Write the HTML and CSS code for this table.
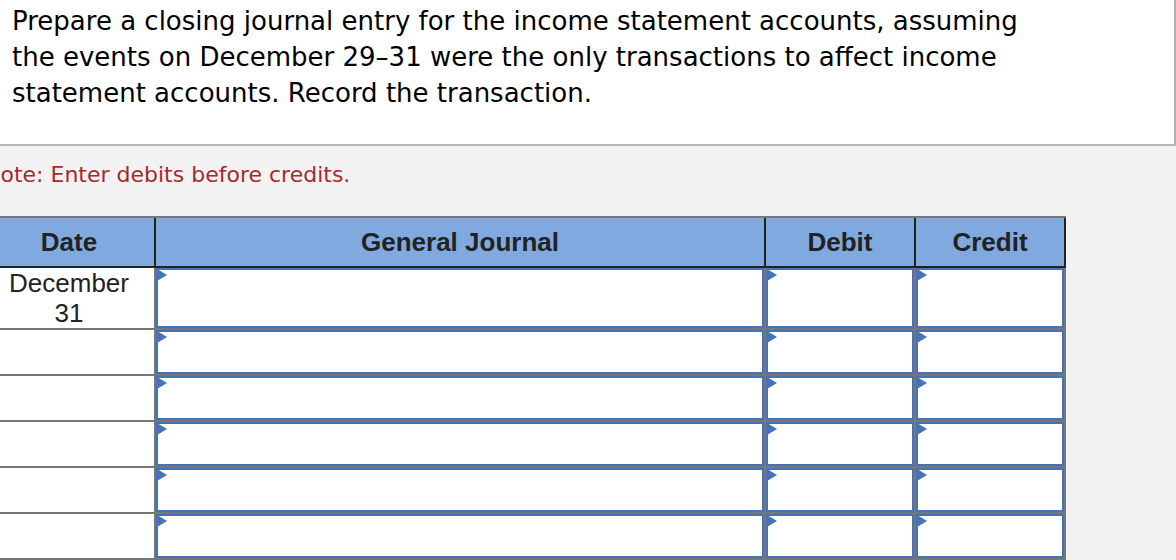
FILE: index.html
```html
<!DOCTYPE html>
<html lang="en">
<head>
<meta charset="utf-8">
<title>Closing journal entry</title>
<link rel="stylesheet" href="styles.css">
</head>
<body>
<div class="page">
  <div class="question">
    <p class="question-text">Prepare a closing journal entry for the income statement accounts, assuming the events on December 29–31 were the only transactions to affect income statement accounts. Record the transaction.</p>
  </div>
  <p class="note">Note: Enter debits before credits.</p>
  <div class="journal">
    <div class="journal-head">
      <div class="hcell">Date</div>
      <div class="hcell">General Journal</div>
      <div class="hcell">Debit</div>
      <div class="hcell">Credit</div>
    </div>
    <div class="journal-body">
      <div class="date-cell">December<br>31</div>
      <div class="input-cell"><span class="flag"></span></div>
      <div class="input-cell"><span class="flag"></span></div>
      <div class="input-cell"><span class="flag"></span></div>

      <div class="date-cell"></div>
      <div class="input-cell"><span class="flag"></span></div>
      <div class="input-cell"><span class="flag"></span></div>
      <div class="input-cell"><span class="flag"></span></div>

      <div class="date-cell"></div>
      <div class="input-cell"><span class="flag"></span></div>
      <div class="input-cell"><span class="flag"></span></div>
      <div class="input-cell"><span class="flag"></span></div>

      <div class="date-cell"></div>
      <div class="input-cell"><span class="flag"></span></div>
      <div class="input-cell"><span class="flag"></span></div>
      <div class="input-cell"><span class="flag"></span></div>

      <div class="date-cell"></div>
      <div class="input-cell"><span class="flag"></span></div>
      <div class="input-cell"><span class="flag"></span></div>
      <div class="input-cell"><span class="flag"></span></div>

      <div class="date-cell"></div>
      <div class="input-cell"><span class="flag"></span></div>
      <div class="input-cell"><span class="flag"></span></div>
      <div class="input-cell"><span class="flag"></span></div>
    </div>
  </div>
</div>
</body>
</html>
```

FILE: styles.css
```css
html, body {
  margin: 0;
  padding: 0;
  background: #f2f2f2;
  overflow: hidden;
}

.page {
  margin-left: -16px;
  width: 1192px;
}

.question {
  background: #ffffff;
  border-right: 2px solid #b4b4b4;
  border-bottom: 2px solid #b4b4b4;
  padding: 3px 0 33px 28px;
}

.question-text {
  margin: 0;
  width: 1030px;
  font-family: "DejaVu Sans", Verdana, sans-serif;
  font-size: 26px;
  line-height: 36px;
  color: #000000;
}

.note {
  margin: 16px 0 28px 0;
  font-family: "DejaVu Sans", Verdana, sans-serif;
  font-size: 22px;
  line-height: 26px;
  color: #a52a2a;
}

.journal {
  width: 1082px;
}

.journal-head {
  display: grid;
  grid-template-columns: 170px 608px 148px 148px;
  column-gap: 2px;
  background: #222222;
  border-top: 2px solid #777777;
  padding: 0 2px 2px 0;
}

.hcell {
  height: 48px;
  display: flex;
  align-items: center;
  justify-content: center;
  background: #80aadf;
  font-family: "Liberation Sans", Arial, sans-serif;
  font-weight: bold;
  font-size: 26px;
  color: #222222;
}

.journal-body {
  display: grid;
  grid-template-columns: 170px 608px 148px 148px;
  grid-template-rows: 60px repeat(5, 44px);
  gap: 2px;
  background: #777777;
  padding: 0 2px 2px 0;
}

.date-cell {
  background: #ffffff;
  text-align: center;
  font-family: "Liberation Sans", Arial, sans-serif;
  font-size: 26px;
  line-height: 30px;
  color: #222222;
}

.input-cell {
  position: relative;
  background: #ffffff;
  border: 2px solid #4672b6;
}

.flag {
  position: absolute;
  left: -1px;
  top: -1px;
  width: 0;
  height: 0;
  border-top: 6.5px solid transparent;
  border-bottom: 6.5px solid transparent;
  border-left: 10px solid #4672b6;
}
```
